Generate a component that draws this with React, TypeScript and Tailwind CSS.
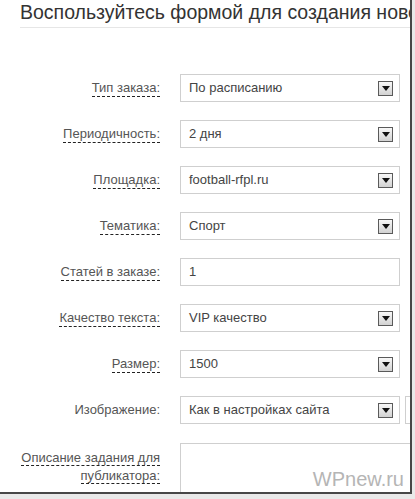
const rows: { label: string; value: string; kind: 'select' | 'input'; dashed?: boolean }[] = [
  { label: 'Тип заказа:', value: 'По расписанию', kind: 'select', dashed: true },
  { label: 'Периодичность:', value: '2 дня', kind: 'select', dashed: true },
  { label: 'Площадка:', value: 'football-rfpl.ru', kind: 'select', dashed: true },
  { label: 'Тематика:', value: 'Спорт', kind: 'select', dashed: true },
  { label: 'Статей в заказе:', value: '1', kind: 'input', dashed: true },
  { label: 'Качество текста:', value: 'VIP качество', kind: 'select', dashed: true },
  { label: 'Размер:', value: '1500', kind: 'select', dashed: true },
];

function DropButton() {
  return (
    <span className="flex h-[15px] w-[15px] items-center justify-center border border-[#5a5a5a] bg-gradient-to-b from-[#f8f8f8] to-[#d2d2d2]">
      <svg width="8" height="5" viewBox="0 0 8 5">
        <path d="M0 0h8L4 5z" fill="#111" />
      </svg>
    </span>
  );
}

function Label({ text, dashed }: { text: string; dashed?: boolean }) {
  return (
    <div className="w-[160px] shrink-0 text-right">
      <span className={dashed ? 'border-b border-dashed border-[#222] pb-[1px]' : ''}>{text}</span>
    </div>
  );
}

function Field({ value, kind }: { value: string; kind: 'select' | 'input' }) {
  return (
    <div className="ml-[20px] flex h-[28px] w-[220px] shrink-0 items-center justify-between border border-[#cfcfcf] bg-white pl-[8px] pr-[6px] text-[#444]">
      <span>{value}</span>
      {kind === 'select' && <DropButton />}
    </div>
  );
}

export default function App() {
  return (
    <div className="h-[499px] w-[415px] overflow-hidden bg-[#e9e9e9] font-['Liberation_Sans',Arial,sans-serif]">
      <div className="relative h-[494px] w-[412px] overflow-hidden border-b-2 border-r-2 border-[#474747] bg-white">
        <div className="ml-[20px] w-[420px] border-b border-[#e6e6e6] pb-[3px] pt-[1px]">
          <h1 className="whitespace-nowrap text-[19.5px] leading-[23px] text-[#333]">
            Воспользуйтесь формой для создания нового заказа
          </h1>
        </div>

        <div className="mt-[46px] flex flex-col gap-[18px] text-[13px] text-[#555]">
          {rows.map((r) => (
            <div key={r.label} className="flex items-center">
              <Label text={r.label} dashed={r.dashed} />
              <Field value={r.value} kind={r.kind} />
            </div>
          ))}

          <div className="flex items-center">
            <Label text="Изображение:" />
            <Field value="Как в настройках сайта" kind="select" />
            <div className="ml-[5px] h-[28px] w-[40px] shrink-0 border border-[#cfcfcf]" />
          </div>

          <div className="flex items-start">
            <div className="w-[160px] shrink-0 pt-[7px] text-right leading-[18px]">
              <span className="border-b border-dashed border-[#222]">Описание задания для</span>
              <br />
              <span className="border-b border-dashed border-[#222]">публикатора:</span>
            </div>
            <div className="ml-[20px] mt-[1px] h-[70px] w-[260px] shrink-0 border border-[#cfcfcf]" />
          </div>
        </div>

        <div className="absolute bottom-[1px] right-[6px] text-[20px] leading-[24px] text-[#b5b5b5]">WPnew.ru</div>
      </div>
    </div>
  );
}
